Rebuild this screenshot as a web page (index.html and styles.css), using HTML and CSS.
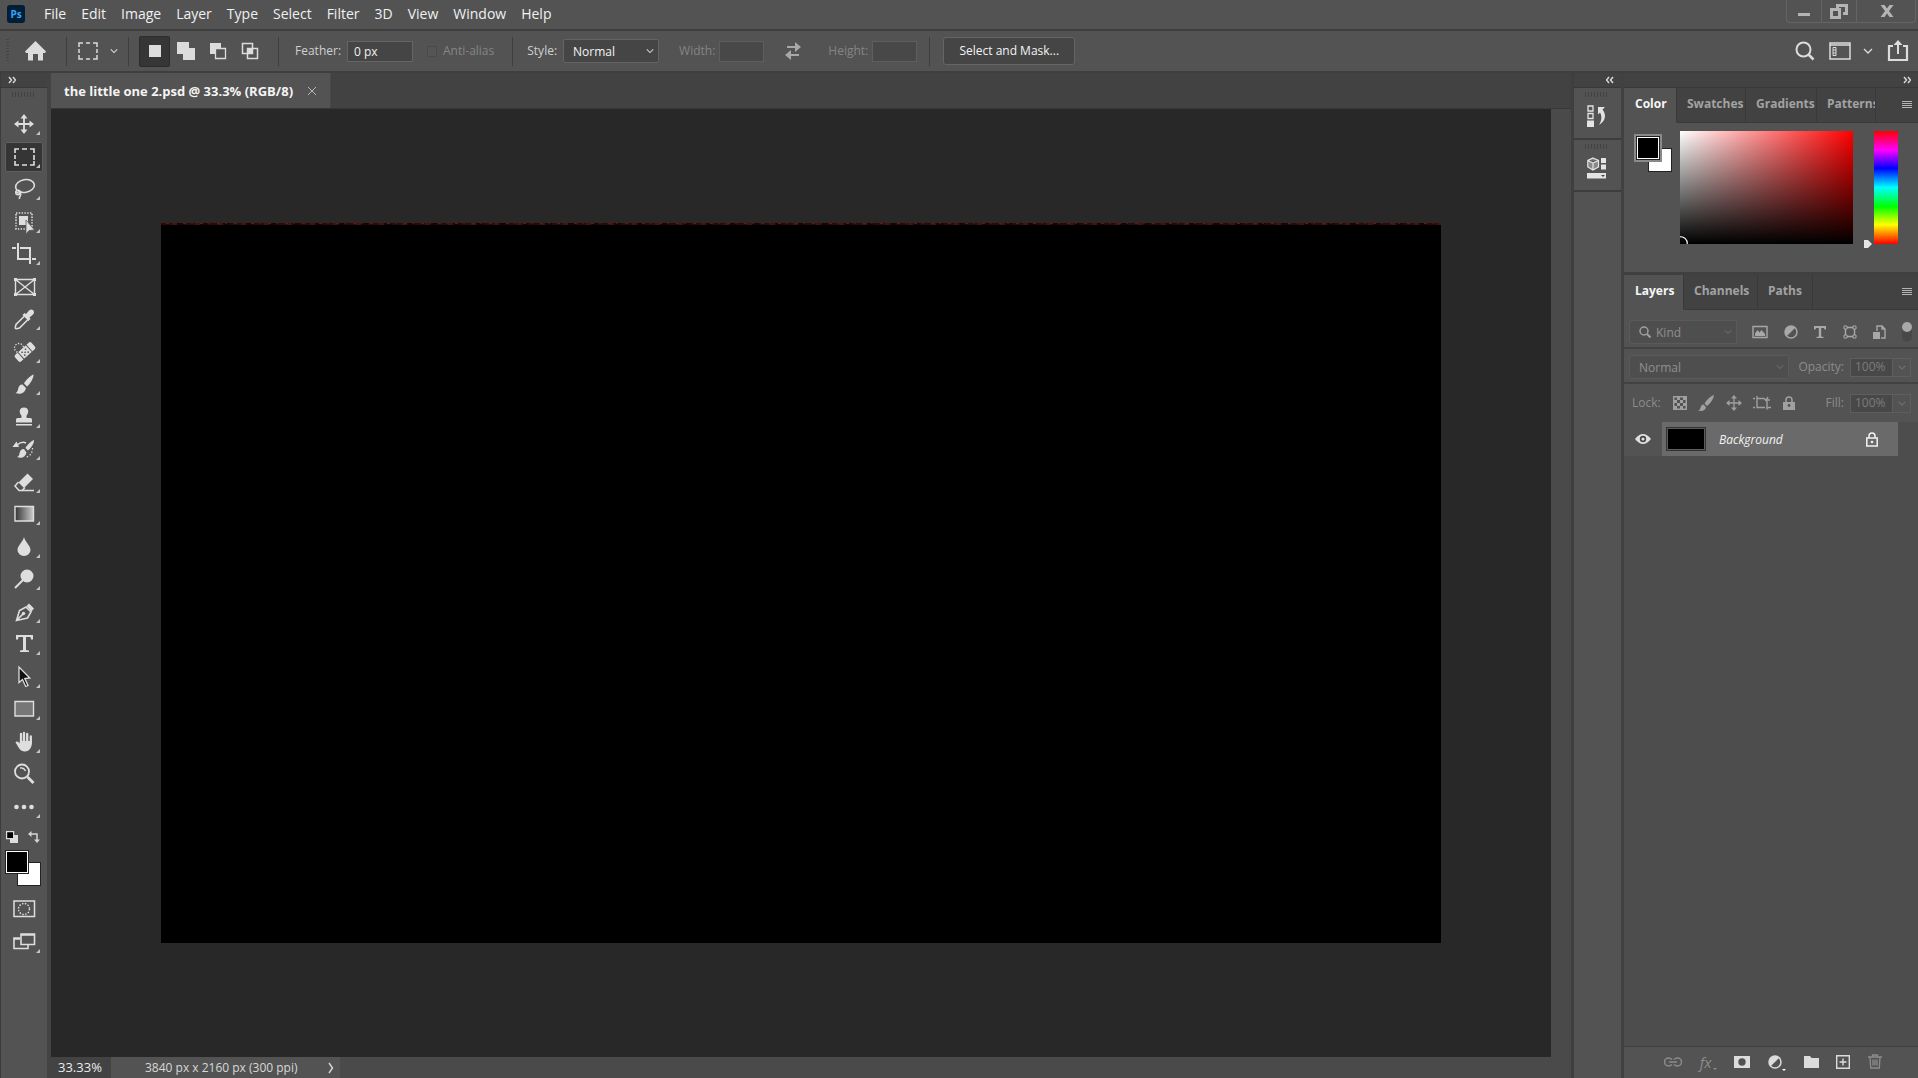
FILE: index.html
```html
<!DOCTYPE html>
<html lang="en">
<head>
<meta charset="utf-8">
<title>the little one 2.psd</title>
<link rel="stylesheet" href="styles.css">
</head>
<body>
<svg class="defs" aria-hidden="true">
  <defs>
    <symbol id="chev" viewBox="0 0 10 6"><path d="M1 1l4 4 4-4" fill="none" stroke="currentColor" stroke-width="1.3"/></symbol>
    <symbol id="more" viewBox="0 0 8 8"><path d="M1 1l2.500 3L1 7M5 1l2.500 3L5 7" fill="none" stroke="currentColor" stroke-width="1.500"/></symbol>
    <symbol id="menu" viewBox="0 0 10 8"><path d="M0 .5h10M0 2.500h10M0 4.500h10M0 6.500h10" stroke="currentColor"/></symbol>
    <symbol id="half" viewBox="0 0 14 14"><circle cx="7" cy="7" r="6" fill="none" stroke="currentColor" stroke-width="1.500"/><path d="M2.700 11.300A6 6 0 0 1 11.300 2.700z" fill="currentColor"/></symbol>
    <symbol id="corner" viewBox="0 0 38 30"><path d="M35 22v4h-4z" fill="#c4c4c4"/></symbol>
  </defs>
</svg>

<header class="menubar">
  <svg class="logo" viewBox="0 0 18 18"><rect width="18" height="18" rx="3" fill="#001e36"/><text x="9" y="13" text-anchor="middle">Ps</text></svg>
  <nav class="menus">
    <a href="#">File</a><a href="#">Edit</a><a href="#">Image</a><a href="#">Layer</a><a href="#">Type</a><a href="#">Select</a><a href="#">Filter</a><a href="#">3D</a><a href="#">View</a><a href="#">Window</a><a href="#">Help</a>
  </nav>
  <div class="winbtns">
    <button aria-label="Minimize"><svg width="20" height="20" viewBox="0 0 20 20"><path d="M4 12h12v3H4z"/></svg></button>
    <button aria-label="Restore"><svg width="20" height="20" viewBox="0 0 20 20"><g fill="none" stroke="currentColor" stroke-width="3"><path d="M8.500 8V4.500h9v8H14"/><path d="M2.500 8.500h8v8h-8z"/></g></svg></button>
    <button aria-label="Close"><svg width="20" height="20" viewBox="0 0 20 20"><path d="M3.500 4h4L10 7.500 12.500 4h4l-4.500 6 4.500 6h-4L10 12.500 7.500 16h-4l4.500-6z"/></svg></button>
  </div>
</header>

<section class="options">
  <span class="vgrip"></span>
  <button class="home" aria-label="Home"><svg width="21" height="20" viewBox="0 0 21 20"><path d="M10.500 0L21 10.500l-1 1.500h-2v7.500h-5V13H8v6.500H3V12H1l-1-1.500z" fill="currentColor"/></svg></button>
  <i class="sep"></i>
  <button class="preset" aria-label="Rectangular marquee presets"><svg width="20" height="18" viewBox="0 0 20 18"><path d="M1 5V1h4M8 1h4M15 1h4v4M19 7v4M19 13v4h-4M12 17H8M5 17H1v-4M1 11V7" fill="none" stroke="currentColor" stroke-width="1.500"/></svg><svg width="8" height="6"><use href="#chev"/></svg></button>
  <i class="sep"></i>
  <div class="modes">
    <button class="on" aria-label="New selection"><svg width="20" height="20" viewBox="0 0 20 20"><path d="M4 4h12v12H4z" fill="currentColor"/></svg></button>
    <button aria-label="Add to selection"><svg width="20" height="20" viewBox="0 0 20 20"><path d="M1 1h12v6h6v12H7v-6H1z" fill="currentColor"/></svg></button>
    <button aria-label="Subtract from selection"><svg width="20" height="20" viewBox="0 0 20 20"><path d="M2 2h11v5H7v6H2z" fill="currentColor"/><path d="M7.500 7.500h10v10h-10z" fill="none" stroke="currentColor" stroke-width="1.300"/></svg></button>
    <button aria-label="Intersect with selection"><svg width="20" height="20" viewBox="0 0 20 20"><path d="M2.500 2.500h10v10h-10zM7.500 7.500h10v10h-10z" fill="none" stroke="currentColor" stroke-width="1.500"/><path d="M7 7h6v6H7z" fill="currentColor"/></svg></button>
  </div>
  <i class="sep"></i>
  <label class="fld feather">Feather: <input type="text" value="0 px"></label>
  <label class="fld anti off"><input type="checkbox" disabled>Anti-alias</label>
  <i class="sep"></i>
  <label class="fld style">Style: <span class="drop"><select><option>Normal</option></select><svg width="8" height="6"><use href="#chev"/></svg></span></label>
  <label class="fld off dim-w">Width: <input type="text" disabled></label>
  <button class="swap" aria-label="Swap width and height" disabled><svg width="18" height="18" viewBox="0 0 18 18"><path d="M3 4h8V0l6 5-6 5V6H3zM15 12v2H7v4l-6-5 6-5v4z" fill="currentColor"/></svg></button>
  <label class="fld off dim-w">Height: <input type="text" disabled></label>
  <i class="sep"></i>
  <button class="mask">Select and Mask...</button>
  <div class="right">
    <button aria-label="Search"><svg width="20" height="20" viewBox="0 0 20 20"><circle cx="8.500" cy="8.500" r="7" fill="none" stroke="currentColor" stroke-width="2"/><path d="M13.500 13.500l5 5" stroke="currentColor" stroke-width="2.500"/></svg></button>
    <button aria-label="Workspace" class="ws"><svg width="22" height="18" viewBox="0 0 22 18"><path d="M1 1h20v16H1zM1 3h20" fill="none" stroke="currentColor" stroke-width="1.500"/><path d="M4 5.500h3v8H4zM4 8h3M4 11h3" fill="none" stroke="currentColor"/></svg><svg width="10" height="6"><use href="#chev"/></svg></button>
    <button aria-label="Share"><svg width="22" height="22" viewBox="0 0 22 22"><path d="M6 6H2v14h18V6h-4" fill="none" stroke="currentColor" stroke-width="2.200"/><path d="M10 14V5H6.500L11 0l4.500 5H12v9z" fill="currentColor"/></svg></button>
  </div>
</section>

<main class="work">
  <aside class="toolbar">
    <button class="strip" aria-label="Expand tools"><svg width="8" height="8"><use href="#more"/></svg></button>
    <span class="grip"></span>
    <div class="tools">
      <button aria-label="Move"><svg viewBox="0 0 38 30"><path d="M19 7v16M11 15h16" stroke="currentColor" stroke-width="1.800"/><path d="M19 5l3.500 4.500h-7zM19 25l3.500-4.500h-7zM9 15l4.500-3.500v7zM29 15l-4.500-3.500v7z" fill="currentColor"/><use href="#corner"/></svg></button>
      <button aria-label="Rectangular marquee" class="on"><svg viewBox="0 0 38 30"><path d="M10 11V7h4M17 7h5M25 7h4v4M29 13v5M29 19v4h-4M22 23h-5M14 23h-4v-4M10 17v-4" fill="none" stroke="currentColor" stroke-width="1.600"/><use href="#corner"/></svg></button>
      <button aria-label="Lasso"><svg viewBox="0 0 38 30"><g fill="none" stroke="currentColor" stroke-width="1.600"><ellipse cx="20" cy="12" rx="9.500" ry="6.300" transform="rotate(-10 20 12)"/><circle cx="13" cy="18.500" r="2.200"/><path d="M11 17.500c2 3 6 .5 4.500 4-.5 1-1.500 1.500-1 3.500"/></g><use href="#corner"/></svg></button>
      <button aria-label="Object selection"><svg viewBox="0 0 38 30"><path d="M11 6h16v16H11z" fill="none" stroke="currentColor" stroke-width="1.600" stroke-dasharray="1.400 1.400"/><path d="M14 9h9v9h-9z" fill="currentColor"/><path d="M21 13v14l3-3.500 5.500-.5z" fill="currentColor" stroke="#535353" stroke-width=".7"/><use href="#corner"/></svg></button>
      <button aria-label="Crop"><svg viewBox="0 0 38 30"><path d="M13 4v16h12M27 20h4M7 9h4M15 9h10v16" fill="none" stroke="currentColor" stroke-width="2"/><use href="#corner"/></svg></button>
      <button aria-label="Frame"><svg viewBox="0 0 38 30"><path d="M10.500 7.500h19v15h-19zM10.500 7.500l19 15M29.500 7.500l-19 15" fill="none" stroke="currentColor" stroke-width="1.400"/><path d="M9 6h3v3H9zM28 6h3v3h-3zM9 21h3v3H9zM28 21h3v3h-3z" fill="currentColor"/></svg></button>
      <button aria-label="Eyedropper"><svg viewBox="0 0 38 30"><path d="M19.500 12L11 20.500q-1 3.500-.5 4 .5.500 4-.5l8.500-8.500" fill="none" stroke="currentColor" stroke-width="1.600"/><path d="M17.500 11l2-2 1.500 1 3-3.500c3-3 7 1 4 4L24.500 13.500l1 1.500-2 2z" fill="currentColor"/><use href="#corner"/></svg></button>
      <button aria-label="Spot healing"><svg viewBox="0 0 38 30"><circle cx="14" cy="11" r="4.500" fill="none" stroke="currentColor" stroke-width="1.300" stroke-dasharray="1.300 1.500"/><g transform="rotate(-42 20 15)"><rect x="9" y="10.500" width="22" height="9" rx="2" fill="currentColor"/><path d="M14.500 10v10M25.500 10v10" stroke="#535353"/><path d="M17 12.500h1.500v1.500H17zM21.500 12.500H23v1.500h-1.500zM19.200 14.500h1.500v1.500h-1.500zM17 16.500h1.500v1.500H17zM21.500 16.500H23v1.500h-1.500z" fill="#535353"/></g><use href="#corner"/></svg></button>
      <button aria-label="Brush"><svg viewBox="0 0 38 30"><path d="M28.500 5.500c-3 1-8 6-9.500 9l3 3c3-2 7-9 6.500-12zM17.500 15.500c-3 0-4 2-4.500 5-.5 2-1 3-2.500 3.500 4 1.500 9 1 10.500-5z" fill="currentColor"/><use href="#corner"/></svg></button>
      <button aria-label="Clone stamp"><svg viewBox="0 0 38 30"><path d="M19 5.500c5 0 5 5 3 7.500-.8 1-.8 2 0 3h3.500q1.500 0 1.500 2v2.500H11V18q0-2 1.500-2H16c.8-1 .8-2 0-3-2-2.500-2-7.500 3-7.500zM11 22h16v1.500H11z" fill="currentColor"/><use href="#corner"/></svg></button>
      <button aria-label="History brush"><svg viewBox="0 0 38 30"><path d="M29 6c-3 1-7 5-8.500 8l2.500 2.500c3-2 6.500-8 6-10.500zM19 15c-3 0-4 2-4.500 4.500-.3 2-1 3-2.500 3.500 4 1.500 8 1 9.500-4.500zM7.500 13l4-5.500 2.500 5.500z" fill="currentColor"/><path d="M12 11q5-4 9-2" fill="none" stroke="currentColor" stroke-width="1.500"/><path d="M27.500 14q0 7-6 9" fill="none" stroke="currentColor" stroke-width="1.300" stroke-dasharray="1.300 2"/><use href="#corner"/></svg></button>
      <button aria-label="Eraser"><svg viewBox="0 0 38 30"><path d="M22.500 6.500L28 12l-9 9-5.500-5.500z" fill="currentColor"/><path d="M13.500 15l-3.500 4 4 4.500h3l3-3M14 23.500h15" fill="none" stroke="currentColor" stroke-width="1.500"/><use href="#corner"/></svg></button>
      <button aria-label="Gradient"><svg viewBox="0 0 38 30"><linearGradient id="gt"><stop offset="0" stop-color="#333"/><stop offset="1" stop-color="#ccc"/></linearGradient><path d="M10 7.500h18.500V22H10z" fill="url(#gt)" stroke="currentColor" stroke-width="1.400"/><use href="#corner"/></svg></button>
      <button aria-label="Blur"><svg viewBox="0 0 38 30"><path d="M19 5c1 5 6.500 8.500 6.500 13a6.500 6 0 0 1-13 0C12.500 13.500 18 10 19 5z" fill="currentColor"/><use href="#corner"/></svg></button>
      <button aria-label="Dodge"><svg viewBox="0 0 38 30"><circle cx="22" cy="12" r="6.500" fill="currentColor"/><path d="M18 16l-8 8" stroke="currentColor" stroke-width="2"/><use href="#corner"/></svg></button>
      <button aria-label="Pen"><svg viewBox="0 0 38 30"><path d="M11.500 23.500l3-10 6.500-3.500 5 5-3.500 6zM11.500 23.500l6.500-6.500" fill="none" stroke="currentColor" stroke-width="1.600"/><circle cx="18.500" cy="16.500" r="1.700" fill="currentColor"/><path d="M21.500 9L24 6.500l5 5-2.500 3z" fill="currentColor"/><use href="#corner"/></svg></button>
      <button aria-label="Type"><svg viewBox="0 0 38 30"><path d="M11 6h17v4.500h-2L25.500 8H21v13l3 .5V23h-9v-1.500l3-.5V8h-4.500L13 10.500h-2z" fill="currentColor"/><use href="#corner"/></svg></button>
      <button aria-label="Path selection"><svg viewBox="0 0 38 30"><path d="M14 5v15.500l3.500-3 3.200 7 2.300-1-3.200-7 5-.5z" fill="#111" stroke="currentColor" stroke-width="1.300"/><use href="#corner"/></svg></button>
      <button aria-label="Rectangle"><svg viewBox="0 0 38 30"><path d="M10 7.500h18.500V22H10z" fill="#777" stroke="currentColor" stroke-width="1.400"/><use href="#corner"/></svg></button>
      <button aria-label="Hand"><svg viewBox="0 0 38 30"><path d="M16 16V7M19 15V6M22.200 15V7M25.800 16V9.500" stroke="currentColor" stroke-width="2.300" stroke-linecap="round"/><path d="M14.800 14h12.100v3c-.5 4-3 7.500-7 7.500-5 0-6-4-9.400-9 .5-1.800 2.700-1.300 4.300 1z" fill="currentColor"/><use href="#corner"/></svg></button>
      <button aria-label="Zoom"><svg viewBox="0 0 38 30"><circle cx="17" cy="12.500" r="7" fill="none" stroke="currentColor" stroke-width="1.800"/><path d="M15 9q4-.5 5.500 3" fill="none" stroke="currentColor" stroke-width="1.300"/><path d="M22.500 18l6 6" stroke="currentColor" stroke-width="2.800"/></svg></button>
      <button aria-label="Edit toolbar"><svg viewBox="0 0 38 30"><g fill="currentColor"><circle cx="11.500" cy="15" r="2.300"/><circle cx="19" cy="15" r="2.300"/><circle cx="26.500" cy="15" r="2.300"/></g><use href="#corner"/></svg></button>
    </div>
    <div class="minis">
      <button aria-label="Default colors"><svg width="12" height="12" viewBox="0 0 12 12"><path d="M4 4h8v8H4z" fill="#ddd"/><path d="M.6.6h7v7h-7z" fill="#000" stroke="#ddd" stroke-width="1.200"/></svg></button>
      <button aria-label="Switch colors"><svg width="12" height="12" viewBox="0 0 12 12"><path d="M2 3h7v6" fill="none" stroke="currentColor" stroke-width="1.500"/><path d="M0 3l3.500-3v6zM9 12l-3-3.500h6z" fill="currentColor"/></svg></button>
    </div>
    <div class="swatch"><button class="bg" aria-label="Background color"></button><button class="fg" aria-label="Foreground color"></button></div>
    <div class="tools end">
      <button aria-label="Quick mask"><svg viewBox="0 0 38 30"><path d="M9 7h20.500v15.500H9z" fill="none" stroke="currentColor" stroke-width="1.500"/><circle cx="19" cy="15" r="5.500" fill="none" stroke="currentColor" stroke-width="1.400" stroke-dasharray="1.500 1.400"/></svg></button>
      <button aria-label="Screen mode"><svg viewBox="0 0 38 30"><path d="M15 11H9v10.500h14v-4M9 12h6" fill="none" stroke="currentColor" stroke-width="1.600"/><path d="M16 7h13.500v10.500H16zM16 8h13.500" fill="#535353" stroke="currentColor" stroke-width="1.600"/><use href="#corner"/></svg></button>
    </div>
  </aside>

  <section class="doc">
    <div class="doctabs"><div class="doctab"><span>the little one 2.psd @ 33.3% (RGB/8)</span><button aria-label="Close document"><svg width="10" height="10" viewBox="0 0 10 10"><path d="M1 1l8 8M9 1L1 9" stroke="currentColor"/></svg></button></div></div>
    <div class="pane"><div class="view"><div class="canvas"></div></div><div class="vscroll"></div></div>
    <footer class="status"><span class="pct">33.33%</span><span class="info">3840 px x 2160 px (300 ppi)<svg width="6" height="12" viewBox="0 0 6 12"><path d="M1 1l3.500 5L1 11" fill="none" stroke="currentColor" stroke-width="1.400"/></svg></span></footer>
  </section>

  <aside class="dock">
    <button class="strip" aria-label="Expand panels"><svg class="flip" width="8" height="8"><use href="#more"/></svg></button>
    <div class="dockitem"><span class="grip"></span><button aria-label="History"><svg width="20" height="22" viewBox="0 0 20 22"><path d="M1 1h5v5H1zM1 8.500h5v5H1z" fill="none" stroke="currentColor" stroke-width="1.300"/><path d="M0 15.500h7V22H0zM11 2h7l-2.500 2.500c4 5 3.500 11-3.500 15.500 3-5 3-9 1-12.500L11 9.500z" fill="currentColor"/></svg></button></div>
    <div class="dockitem"><span class="grip"></span><button aria-label="Properties"><svg width="20" height="22" viewBox="0 0 20 22"><path d="M6 1l5.500 2.500V10L6 13 .8 10V3.500zM.8 3.500L6 6l5.500-2.500M6 6v7" fill="#888" stroke="currentColor" stroke-width="1.200"/><path d="M14 1h5v5h-5zM14 7.500h5v5h-5zM0 16h19v5.500H0z" fill="currentColor"/><path d="M14 18h4l-2 2z" fill="#444"/></svg></button></div>
  </aside>

  <aside class="panels">
    <button class="strip end" aria-label="Collapse panels"><svg width="8" height="8"><use href="#more"/></svg></button>
    <section class="panel color">
      <div class="tabs"><button class="on t1">Color</button><button class="t2">Swatches</button><button class="t3">Gradients</button><button class="t4">Patterns</button><button class="pm" aria-label="Panel menu"><svg width="10" height="8"><use href="#menu"/></svg></button></div>
      <div class="colorbody">
        <div class="swatch big"><button class="bg" aria-label="Background color"></button><button class="fg" aria-label="Foreground color"></button></div>
        <div class="field"><svg width="8" height="8" viewBox="0 0 8 8"><path d="M0 .8A6.500 6.500 0 0 1 7.200 8" fill="none" stroke="#fff" stroke-width="1.200"/></svg></div>
        <div class="hue"><svg width="10" height="10" viewBox="0 0 10 10"><path d="M1 1h4l4 4-4 4H1z" fill="#e6e6e6"/></svg></div>
      </div>
    </section>
    <section class="panel layers">
      <div class="tabs"><button class="on l1">Layers</button><button class="l2">Channels</button><button class="l3">Paths</button><button class="pm" aria-label="Panel menu"><svg width="10" height="8"><use href="#menu"/></svg></button></div>
      <div class="row filter">
        <span class="drop kind"><svg class="mag" width="12" height="12" viewBox="0 0 12 12"><circle cx="5" cy="5" r="4" fill="none" stroke="currentColor" stroke-width="1.500"/><path d="M8 8l3.500 3.500" stroke="currentColor" stroke-width="2"/></svg><select aria-label="Filter type" disabled><option>Kind</option></select><svg width="8" height="6"><use href="#chev"/></svg></span>
        <div class="ficons">
          <button aria-label="Pixel layers"><svg width="16" height="14" viewBox="0 0 16 14"><path d="M1 1.500h14v11H1z" fill="none" stroke="currentColor" stroke-width="1.400"/><path d="M3 11V8.500L5.500 5l2 2.500L9.500 5 13 9v2z" fill="currentColor"/></svg></button>
          <button aria-label="Adjustment layers"><svg width="14" height="14"><use href="#half"/></svg></button>
          <button aria-label="Type layers"><svg width="14" height="14" viewBox="0 0 14 14"><path d="M1 1h12v3.500h-1.500L11 3H8.200v8.500l2.300.5v1h-7v-1l2.300-.5V3H3l-.5 1.500H1z" fill="currentColor"/></svg></button>
          <button aria-label="Shape layers"><svg width="14" height="14" viewBox="0 0 14 14"><path d="M2.500 2.500h9v9h-9z" fill="none" stroke="currentColor" stroke-width="1.400"/><path d="M1 1h3v3H1zM10 1h3v3h-3zM1 10h3v3H1zM10 10h3v3h-3z" fill="#535353" stroke="currentColor"/></svg></button>
          <button aria-label="Smart objects"><svg width="14" height="14" viewBox="0 0 14 14"><path d="M5 6V1h5l3 3v9H9M10 1v3h3" fill="none" stroke="currentColor" stroke-width="1.400"/><path d="M1 7h7v7H1z" fill="currentColor"/></svg></button>
          <button aria-label="Layer filtering on or off" class="tog"><i></i></button>
        </div>
      </div>
      <div class="row mix">
        <span class="drop blend"><select aria-label="Blend mode" disabled><option>Normal</option></select><svg width="8" height="6"><use href="#chev"/></svg></span>
        <label class="num">Opacity: <span><input type="text" value="100%" disabled><b><svg width="8" height="5"><use href="#chev"/></svg></b></span></label>
      </div>
      <div class="row lock">
        <span class="lbl">Lock:</span>
        <div class="licons">
          <button aria-label="Lock transparent pixels"><svg width="14" height="14" viewBox="0 0 14 14"><path d="M.7.7h12.600v12.600H.7z" fill="none" stroke="currentColor" stroke-width="1.400"/><path d="M4 1h3v3H4zM10 1h3v3h-3zM1 4h3v3H1zM7 4h3v3H7zM4 7h3v3H4zM10 7h3v3h-3zM1 10h3v3H1zM7 10h3v3H7z" fill="currentColor"/></svg></button>
          <button aria-label="Lock image pixels"><svg width="16" height="16" viewBox="0 0 16 16"><path d="M16 0C12 1 8 6 6.500 8.500L9 11c3-2 6.500-7 7-11zM5.500 9.500C3 9.500 3 12 2 14q-.5 1-2 1.500c3.500 1 7.500.5 8-3.500z" fill="currentColor"/></svg></button>
          <button aria-label="Lock position"><svg width="16" height="16" viewBox="0 0 16 16"><path d="M8 2v12M2 8h12" stroke="currentColor" stroke-width="1.300"/><path d="M8 0l3 3.500H5zM8 16l3-3.500H5zM0 8l3.500-3v6zM16 8l-3.500-3v6z" fill="currentColor"/></svg></button>
          <button aria-label="Lock artboard nesting"><svg width="18" height="14" viewBox="0 0 18 14"><path d="M0 2.500h2M4 2.500h7l3 3v8M4 0v11.500h8M14 11.500h4M15 1l-2 3h4M0 11.500h2" fill="none" stroke="currentColor" stroke-width="1.400"/></svg></button>
          <button aria-label="Lock all"><svg width="12" height="14" viewBox="0 0 12 14"><path d="M3 6V4a3 3 0 0 1 6 0v2" fill="none" stroke="currentColor" stroke-width="1.500"/><path d="M0 6h12v8H0z" fill="currentColor"/><circle cx="6" cy="9.500" r="1.400" fill="#535353"/></svg></button>
        </div>
        <label class="num">Fill: <span><input type="text" value="100%" disabled><b><svg width="8" height="5"><use href="#chev"/></svg></b></span></label>
      </div>
      <div class="list">
        <div class="layer">
          <button class="eye" aria-label="Layer visibility"><svg width="16" height="10" viewBox="0 0 16 10"><path d="M0 5q8-10 16 0-8 10-16 0z" fill="currentColor"/><circle cx="8" cy="5" r="3.200" fill="#444"/><circle cx="8" cy="5" r="1.600" fill="currentColor"/></svg></button>
          <div class="lrow"><span class="thumb"></span><span class="name">Background</span><svg width="12" height="15" viewBox="0 0 12 15"><path d="M3 6V4a3 3 0 0 1 6 0v2M.8 6h10.400v8H.8z" fill="none" stroke="currentColor" stroke-width="1.500"/><circle cx="6" cy="10" r="1.300" fill="currentColor"/></svg></div>
        </div>
      </div>
      <div class="actions">
        <button class="off" aria-label="Link layers"><svg width="18" height="10" viewBox="0 0 18 10"><path d="M8 7.500Q6.500 9 4.500 9A4 4 0 0 1 4.500 1Q6.500 1 8 2.500M10 2.500Q11.500 1 13.500 1a4 4 0 0 1 0 8Q11.500 9 10 7.500M5 5h8" fill="none" stroke="currentColor" stroke-width="1.500"/></svg></button>
        <button class="off fx" aria-label="Layer style">fx<svg width="4" height="2" viewBox="0 0 4 2"><path d="M0 0h4L2 2z" fill="currentColor"/></svg></button>
        <button aria-label="Add mask"><svg width="16" height="12" viewBox="0 0 16 12"><path d="M0 0h16v12H0z" fill="currentColor"/><circle cx="8" cy="6" r="3.700" fill="#505050"/></svg></button>
        <button aria-label="New adjustment layer"><svg width="18" height="18" viewBox="0 0 18 18"><use href="#half" x="0" y="2" width="14" height="14"/><path d="M14 16h4l-2 2z" fill="#fff"/></svg></button>
        <button aria-label="New group"><svg width="15" height="12" viewBox="0 0 15 12"><path d="M0 0h6l1.500 2H15v10H0z" fill="currentColor"/></svg></button>
        <button aria-label="New layer"><svg width="14" height="14" viewBox="0 0 14 14"><path d="M.7.7h12.600v12.600H.7zM7 3.500v7M3.500 7h7" fill="none" stroke="currentColor" stroke-width="1.400"/></svg></button>
        <button class="off" aria-label="Delete layer"><svg width="14" height="15" viewBox="0 0 14 15"><path d="M0 3h14M4.500 3V1h5v2M2 3l.7 11h8.600L12 3M5 5.500v6M7 5.500v6M9 5.500v6" fill="none" stroke="currentColor" stroke-width="1.300"/></svg></button>
      </div>
    </section>
  </aside>
</main>
</body>
</html>
```

FILE: styles.css
```css
* { box-sizing: border-box; }
html, body { height: 100%; margin: 0; }
body {
  display: flex;
  flex-direction: column;
  background: #535353;
  color: #e4e4e4;
  font: 12px/16px "Open Sans", "Noto Sans", sans-serif;
  overflow: hidden;
}
button {
  display: flex;
  align-items: center;
  justify-content: center;
  padding: 0;
  border: 0;
  background: none;
  color: inherit;
  font: inherit;
}
input, select { font: inherit; color: inherit; margin: 0; opacity: 1; }
svg { display: block; flex: none; }
.defs { position: absolute; width: 0; height: 0; }

/* menu bar */
.menubar { display: flex; height: 29px; flex: none; align-items: flex-start; padding-right: 2px; }
.logo { width: 18px; height: 18px; margin: 5px 0 0 7px; }
.logo text { font: bold 10px "Open Sans", sans-serif; fill: #31a8ff; }
.menus { display: flex; gap: 15px; margin-left: 19px; font-size: 14px; line-height: 28px; }
.menus a { color: #f0f0f0; text-decoration: none; }
.winbtns { display: flex; margin-left: auto; height: 23px; border: 1px solid #646464; border-top: 0; border-radius: 0 0 4px 4px; color: #b4b4b4; }
.winbtns button { width: 35px; border-right: 1px solid #646464; }
.winbtns button:last-child { width: 58px; border: 0; padding-left: 2px; }
.winbtns svg { fill: currentColor; }

/* options bar */
.options { display: flex; align-items: center; height: 44px; flex: none; border-top: 2px solid #3f3f3f; border-bottom: 2px solid #3f3f3f; padding: 0 9px 0 6px; color: #dcdcdc; }
.vgrip { width: 3px; height: 24px; margin-right: 16px; background: repeating-linear-gradient(#444 0 1px, #535353 1px 3px); }
.sep { width: 1px; height: 29px; background: #3e3e3e; }
.home { margin-right: 20px; }
.preset { gap: 12px; padding: 0 10px; width: 61px; }
.modes { display: flex; margin: 0 18px 0 10px; }
.modes button { width: 31px; height: 31px; }
.modes .on { background: #363636; border: 1px solid #2c2c2c; border-radius: 2px; }
.modes button + button { width: 32px; }
.fld { display: flex; align-items: center; gap: 6px; color: #d0d0d0; }
.fld input[type=text] { width: 45px; height: 21px; border: 1px solid #656565; background: #454545; padding: 0 6px; color: #f0f0f0; }
.feather { margin-left: 16px; }
.modes + .sep { margin-left: -6px; }
.feather input[type=text] { width: 66px; }
.anti { margin: 0 18px 0 14px; }
.anti input { appearance: none; width: 10px; height: 11px; border: 1px solid #4a4a4a; background: #555; }
.fld.off { color: #858585; }
.off input[type=text] { border-color: #5e5e5e; background: #484848; }
.drop { display: grid; align-items: center; }
.drop select { grid-area: 1 / 1; appearance: none; width: 100%; height: 24px; background: #454545; border: 1px solid #646464; border-radius: 2px; padding: 1px 9px 0; color: #f4f4f4; }
.drop > svg { grid-area: 1 / 1; justify-self: end; margin-right: 5px; pointer-events: none; }
.style { margin: 0 20px 0 14px; }
.style .drop { width: 96px; }
.dim-w { gap: 4px; }
.swap { margin: 0 26px 0 20px; color: #a8a8a8; }
.dim-w + .sep { margin: 0 13px 0 12px; }
.mask { height: 28px; width: 132px; border: 1px solid #656565; border-radius: 3px; background: #454545; color: #f4f4f4; }
.right { display: flex; align-items: center; gap: 14px; margin-left: auto; }
.ws { gap: 12px; }

/* work area */
.work { display: flex; flex: 1; min-height: 0; }
.strip { height: 15px; width: 100%; flex: none; background: #424242; border-bottom: 1px solid #383838; color: #d8d8d8; justify-content: flex-start; }
.strip.end { justify-content: flex-end; padding-right: 7px; }
.grip { height: 5px; width: 24px; flex: none; margin: 4px auto 0; background: repeating-linear-gradient(90deg, #424242 0 1px, #535353 1px 3px); }
.flip { transform: scaleX(-1); }

.toolbar { display: flex; flex-direction: column; width: 51px; flex: none; border-left: 1px solid #3c3c3c; border-right: 4px solid #434343; }
.toolbar .strip { padding-left: 7px; }
.toolbar .grip { margin-left: 11px; }
.tools { display: grid; grid-auto-rows: 1fr; height: 715px; margin: 11px 0 0 4px; align-items: center; justify-items: start; flex: none; }
.tools button { width: 38px; height: 30px; color: #dedede; }
.tools svg { width: 38px; height: 30px; }
.tools .on { background: #353535; outline: 1px solid #606060; outline-offset: -1px; border-radius: 2px; }
.tools.end { height: 65px; margin-top: 7px; }
.minis { display: flex; gap: 10px; margin: 8px 0 0 5px; color: #d4d4d4; }
.swatch { display: grid; width: 36px; height: 36px; margin: 7px 0 0 4px; }
.swatch button { grid-area: 1 / 1; width: 24px; height: 24px; border: 1px solid #222; background: #fff; }
.swatch .bg { place-self: end; }
.swatch .fg { background: #000; box-shadow: inset 0 0 0 1px #fff; }

.doc { display: flex; flex-direction: column; flex: 1; min-width: 0; }
.doctabs { height: 36px; flex: none; background: #424242; border-bottom: 1px solid #383838; display: flex; }
.doctab { display: flex; align-items: center; gap: 14px; width: 280px; padding: 1px 0 0 13px; background: #535353; border-right: 1px solid #484848; font-size: 13px; font-weight: 700; color: #f4f4f4; white-space: nowrap; }
.doctab button { color: #b8b8b8; }
.pane { display: flex; flex: 1; min-height: 0; }
.view { flex: 1; background: #282828; display: flex; align-items: center; justify-content: center; }
.canvas {
  width: 1280px;
  height: 720px;
  background:
    repeating-linear-gradient(90deg, #0000 0 5px, #6a1414 5px 8px, #0000 8px 13px, #501010 13px 15px, #0000 15px 17px) 0 0 / 100% 1px no-repeat,
    repeating-linear-gradient(90deg, #2c0808 0 11px, #4a0e0e 11px 16px, #180404 16px 23px) 0 0 / 100% 2px no-repeat,
    #000;
}
.vscroll { width: 20px; background: #4a4a4a; }
.status { display: flex; height: 21px; flex: none; background: #4a4a4a; line-height: 20px; }
.pct { width: 60px; background: #434343; padding-left: 7px; color: #ececec; font-size: 13px; }
.info { display: flex; align-items: center; justify-content: space-between; width: 229px; background: #535353; padding: 1px 6px 0 34px; color: #d8d8d8; }

.dock { display: flex; flex-direction: column; width: 53px; flex: none; border-left: 3px solid #3f3f3f; border-right: 3px solid #414141; }
.dock .strip { padding-left: 32px; }
.dockitem { height: 52px; border-bottom: 2px solid #3d3d3d; }
.dockitem .grip { margin-left: 11px; display: block; }
.dockitem button { margin: 8px 0 0 13px; }

.panels { display: flex; flex-direction: column; width: 294px; flex: none; }
.panel { display: flex; flex-direction: column; }
.color { height: 187px; border-bottom: 3px solid #404040; }
.layers { flex: 1; min-height: 0; }
.tabs { display: flex; height: 35px; flex: none; background: #424242; font-weight: 700; color: #a2a2a2; }
.tabs button { justify-content: flex-start; padding: 0 0 2px 10px; border-right: 1px solid #393939; border-bottom: 1px solid #393939; overflow: hidden; white-space: nowrap; }
.tabs .on { background: #535353; color: #f6f6f6; border-bottom-color: #535353; padding-left: 11px; }
.t1 { width: 53px; } .t2 { width: 69px; } .t3 { width: 71px; } .t4 { width: 59px; }
.l1 { width: 60px; } .l2 { width: 74px; } .l3 { width: 55px; }
.tabs .pm { flex: 1; border-right: 0; justify-content: flex-end; padding: 0 6px 0 0; color: #b4b4b4; }
.colorbody { display: flex; padding: 8px 20px 0 12px; }
.big { margin: 5px 8px 0 0; }
.big .fg { outline: 2px solid #8a8a8a; }
.field { display: flex; align-items: flex-end; flex: 1; height: 113px; background: linear-gradient(to top, #000, transparent), linear-gradient(to right, #fff, #f00); }
.hue { position: relative; width: 24px; height: 113px; margin-left: 21px; background: linear-gradient(#f00, #f0f 17%, #00f 33%, #0ff 50%, #0f0 67%, #ff0 83%, #f00); }
.hue svg { position: absolute; left: -11px; bottom: -5px; }

.row { display: flex; align-items: center; height: 35px; flex: none; padding: 0 7px 0 5px; border-bottom: 2px solid #424242; color: #8c8c8c; }
.filter { height: 39px; padding: 7px 6px 0 5px; }
.mix { padding-top: 3px; }
.row .drop select { background: #4e4e4e; border-color: #5a5a5a; color: #909090; }
.row .drop > svg { color: #6a6a6a; }
.kind { width: 108px; }
.row .kind select { padding-left: 26px; }
.row .kind .mag { justify-self: start; margin-left: 10px; color: #a0a0a0; z-index: 1; }
.ficons { display: flex; flex: 1; align-items: center; justify-content: space-between; margin-left: 15px; color: #a8a8a8; }
.tog { width: 10px; height: 20px; border-radius: 5px; background: #484848; align-items: flex-start; }
.tog i { width: 10px; height: 10px; border-radius: 5px; background: #a8a8a8; }
.blend { width: 160px; }
.num { display: flex; align-items: center; gap: 6px; margin-left: auto; }
.num span { display: flex; width: 61px; height: 19px; border: 1px solid #5e5e5e; }
.num input { flex: 1; min-width: 0; padding: 0 4px; border: 0; border-right: 1px solid #5e5e5e; background: #484848; color: #7c7c7c; }
.num b { display: flex; align-items: center; justify-content: center; width: 17px; color: #747474; }
.lock { height: 38px; border: 0; padding-left: 8px; }
.licons { display: flex; align-items: center; justify-content: space-between; width: 122px; margin-left: 12px; color: #a0a0a0; }
.list { flex: 1; min-height: 0; background: #4d4d4d; }
.layer { display: flex; height: 34px; }
.eye { width: 38px; background: #535353; color: #e0e0e0; }
.lrow { display: flex; align-items: center; flex: 1; margin-right: 20px; padding: 0 20px 0 4px; background: #6a6a6a; color: #f2f2f2; }
.thumb { width: 40px; height: 24px; background: #000; border: 1px solid #333; outline: 1px solid #5c5c5c; outline-offset: -2px; }
.name { flex: 1; margin-left: 13px; padding-top: 1px; font-style: italic; }
.actions { display: flex; align-items: center; justify-content: space-between; height: 32px; flex: none; border-top: 1px solid #3f3f3f; padding: 0 36px 2px 40px; color: #dcdcdc; }
.actions .off { color: #8c8c8c; }
.fx { font-size: 15px; font-style: italic; }
.fx svg { align-self: flex-end; margin-left: 1px; }
```
